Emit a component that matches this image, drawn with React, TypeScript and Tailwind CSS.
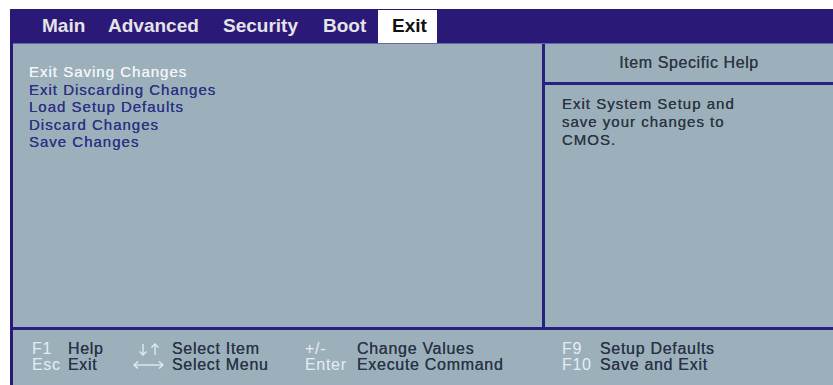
import React from "react";

function Footer() {
  const key = "text-[#e6edf2]";
  const desc = "text-[#2a3446] [text-shadow:0_0_0.5px_#2a3446]";
  return (
    <div className="flex pl-[19px] pt-[11px] text-[16px] leading-[16px] tracking-[0.7px]">
      <div className="grid w-[101px] grid-cols-[36px_1fr]">
        <span className={key}>F1</span>
        <span className={desc}>Help</span>
        <span className={key}>Esc</span>
        <span className={desc}>Exit</span>
      </div>
      <div className="grid w-[172px] grid-cols-[39px_1fr]">
        <span className="flex items-center pl-[5px]">
          <svg width="23" height="13" viewBox="0 0 23 13" fill="none" stroke="#e6edf2" strokeWidth="1.3">
            <path d="M5 1 V12" />
            <path d="M1.5 8.5 L5 12 L8.5 8.5" />
            <path d="M17 1 V12" />
            <path d="M13.5 4.5 L17 1 L20.5 4.5" />
          </svg>
        </span>
        <span className={desc}>Select Item</span>
        <span className="flex items-center">
          <svg width="31" height="10" viewBox="0 0 31 10" fill="none" stroke="#e6edf2" strokeWidth="1.3">
            <path d="M1 5 H30" />
            <path d="M5 1.5 L1 5 L5 8.5" />
            <path d="M26 1.5 L30 5 L26 8.5" />
          </svg>
        </span>
        <span className={desc}>Select Menu</span>
      </div>
      <div className="grid w-[257px] grid-cols-[52px_1fr]">
        <span className={key}>+/-</span>
        <span className={desc}>Change Values</span>
        <span className={key}>Enter</span>
        <span className={desc}>Execute Command</span>
      </div>
      <div className="grid grid-cols-[38px_1fr]">
        <span className={key}>F9</span>
        <span className={desc}>Setup Defaults</span>
        <span className={key}>F10</span>
        <span className={desc}>Save and Exit</span>
      </div>
    </div>
  );
}

export default function App() {
  const tabs = [
    { name: "Main", w: "w-[66px]" },
    { name: "Advanced", w: "w-[115px]" },
    { name: "Security", w: "w-[100px]" },
    { name: "Boot", w: "w-[67px]" },
  ];
  return (
    <div className="h-[385px] w-[833px] overflow-hidden bg-white pl-[10px] pt-[9px] font-['Liberation_Sans',Arial,sans-serif]">
      <div className="flex h-[376px] flex-col border-l-[3px] border-[#2b1978] bg-[#9cb0bc]">
        {/* Top bar */}
        <div className="flex h-[34px] items-stretch bg-[#2b1978] pl-[17px] text-[19px] font-bold">
          {tabs.map((t) => (
            <div key={t.name} className={`${t.w} flex items-center pl-[12px] text-[#e4e4e8]`}>
              {t.name}
            </div>
          ))}
          <div className="mt-[1px] flex w-[59px] items-center bg-white pl-[14px] text-[#111111]">Exit</div>
        </div>
        <div className="h-px bg-[#6a64a8]" />

        {/* Main */}
        <div className="flex h-[283px]">
          <div className="w-[529px] pl-[16px] pt-[19px] text-[15px] leading-[17.5px] tracking-[1px] text-[#2d3183] [text-shadow:0_0_0.5px_currentColor]">
            <div className="text-[#f2f5f7]">Exit Saving Changes</div>
            <div>Exit Discarding Changes</div>
            <div>Load Setup Defaults</div>
            <div>Discard Changes</div>
            <div>Save Changes</div>
          </div>
          <div className="w-[3px] bg-[#2a2080]" />
          <div className="flex flex-1 flex-col">
            <div className="flex h-[38px] items-center justify-center text-[16px] tracking-[0.6px] text-[#2e3641] [text-shadow:0_0_0.5px_#2e3641]">
              Item Specific Help
            </div>
            <div className="h-[3px] bg-[#2a2080]" />
            <div className="pl-[17px] pt-[10px] text-[15px] leading-[18px] tracking-[1px] text-[#2c3541] [text-shadow:0_0_0.5px_#2c3541]">
              <div>Exit System Setup and</div>
              <div>save your changes to</div>
              <div>CMOS.</div>
            </div>
          </div>
        </div>

        <div className="h-[3px] bg-[#2a2080]" />

        <Footer />
      </div>
    </div>
  );
}
